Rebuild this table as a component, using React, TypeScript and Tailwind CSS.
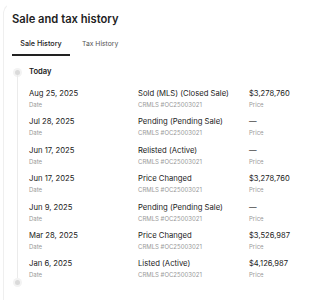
const rows = [
  { date: 'Aug 25, 2025', event: 'Sold (MLS) (Closed Sale)', price: '$3,278,760' },
  { date: 'Jul 28, 2025', event: 'Pending (Pending Sale)', price: '—' },
  { date: 'Jun 17, 2025', event: 'Relisted (Active)', price: '—' },
  { date: 'Jun 17, 2025', event: 'Price Changed', price: '$3,278,760' },
  { date: 'Jun 9, 2025', event: 'Pending (Pending Sale)', price: '—' },
  { date: 'Mar 28, 2025', event: 'Price Changed', price: '$3,526,987' },
  { date: 'Jan 6, 2025', event: 'Listed (Active)', price: '$4,126,987' },
];

export default function App() {
  return (
    <div className="w-[310px] h-[300px] overflow-hidden bg-white text-[#222] font-['Inter',sans-serif]">
      <div className="ml-[3px] mt-[2px] h-[320px] border-l border-t border-t-white border-l-[#efefef] rounded-tl-xl pl-[8px]">
        <h2 className="mt-[7px] text-[11.2px] leading-[18px] font-semibold">Sale and tax history</h2>

        <div className="mt-[11px] flex items-end">
          <div className="w-[58px] flex flex-col items-center">
            <span className="text-[7.2px] font-medium leading-[10px]">Sale History</span>
            <div className="mt-[5px] h-[2px] w-full bg-[#222]" />
          </div>
          <span className="ml-[12px] mb-[7px] text-[6.8px] leading-[10px] text-[#555]">Tax History</span>
        </div>

        <div className="mt-[10px] flex">
          <div className="w-[10px] flex flex-col items-center">
            <div className="mt-[3.5px] w-[5px] h-[5px] rounded-full bg-[#dadada] ring-2 ring-[#f3f3f3]" />
            <div className="flex-1 w-px bg-[#ebebeb]" />
            <div className="mb-[2px] w-[5px] h-[5px] rounded-full bg-[#dadada] ring-2 ring-[#f3f3f3]" />
          </div>
          <div className="ml-[7px] flex-1">
            <div className="text-[7.6px] leading-[12px] font-semibold">Today</div>
            <div className="mt-[10px]">
              {rows.map((r, i) => (
                <div key={i} className="h-[28.4px] flex">
                  <div className="w-[109px]">
                    <div className="text-[7.7px] leading-[12px]">{r.date}</div>
                    <div className="text-[6px] leading-[9px] text-[#999]">Date</div>
                  </div>
                  <div className="w-[111px]">
                    <div className="text-[7.7px] leading-[12px]">{r.event}</div>
                    <div className="text-[6px] leading-[9px] text-[#999]">CRMLS #OC25003021</div>
                  </div>
                  <div>
                    <div className="text-[7.6px] leading-[12px]">{r.price}</div>
                    <div className="text-[6px] leading-[9px] text-[#999]">Price</div>
                  </div>
                </div>
              ))}
            </div>
          </div>
        </div>
      </div>
    </div>
  );
}
